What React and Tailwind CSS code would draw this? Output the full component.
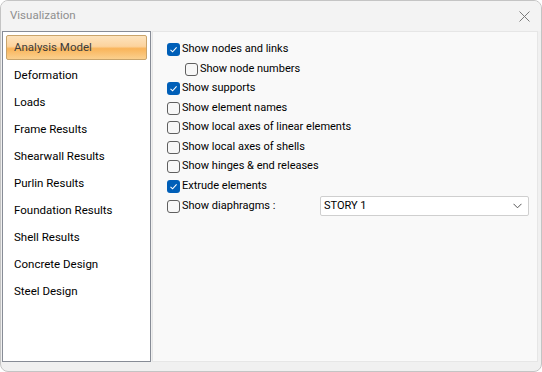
import React from "react";

const leftItems = [
  "Analysis Model",
  "Deformation",
  "Loads",
  "Frame Results",
  "Shearwall Results",
  "Purlin Results",
  "Foundation Results",
  "Shell Results",
  "Concrete Design",
  "Steel Design",
];

function Check({ checked }) {
  if (checked) {
    return (
      <span className="w-[13px] h-[13px] rounded-[3px] bg-[#005fb8] flex items-center justify-center shrink-0">
        <svg width="9" height="9" viewBox="0 0 9 9">
          <path d="M1.5 4.8 L3.6 6.8 L7.6 2.3" fill="none" stroke="#fff" strokeWidth="1.1" />
        </svg>
      </span>
    );
  }
  return <span className="w-[13px] h-[13px] rounded-[3px] border border-[#5f5f5f] bg-[#f7f7f7] shrink-0" />;
}

function Row({ checked, label, indent, h }) {
  return (
    <div className={`flex items-center gap-[2px] ${indent ? "pl-[18px]" : ""} ${h}`}>
      <Check checked={checked} />
      <span>{label}</span>
    </div>
  );
}

export default function App() {
  return (
    <div
      className="w-[542px] h-[372px] bg-[#f0f0f0] border border-[#c4c4c4] rounded-[8px] overflow-hidden flex flex-col text-[#1b1b1b]"
      style={{ fontFamily: 'Roboto, "Noto Sans", sans-serif' }}
    >
      <div className="h-[30px] flex items-center justify-between pl-[9px] pr-[11px] bg-[#f3f3f3]">
        <span className="text-[11.5px] text-[#8f8f8f]">Visualization</span>
        <svg width="11" height="11" viewBox="0 0 11 11">
          <path d="M0.5 0.5 L10.5 10.5 M10.5 0.5 L0.5 10.5" stroke="#7a7a7a" strokeWidth="1" />
        </svg>
      </div>
      <div className="flex flex-1 pl-[1px] pr-[3px] pb-[9px] gap-[1px]">
        <div className="w-[149px] bg-white border border-[#878c96] px-[3px] pt-[3px] flex flex-col text-[11.5px]">
          {leftItems.map((t, i) =>
            i === 0 ? (
              <div key={t} className="h-[27px] pb-[2px]">
                <div className="h-[25px] flex items-center pl-[7px] border border-[#c9a46b] rounded-[2px] text-[#3b3b3b] bg-[linear-gradient(to_bottom,#fde3bd_0%,#fcd39d_45%,#f9b45a_55%,#fbd08e_100%)]">
                  {t}
                </div>
              </div>
            ) : (
              <div key={t} className="h-[27px] flex items-center pl-[8px] text-black">
                {t}
              </div>
            )
          )}
        </div>
        <div className="flex-1 bg-[#f9f9f9] border border-[#e6e6e6] pl-[14px] pt-[7px] text-[11px] text-black">
          <Row checked label="Show nodes and links" h="h-[21px]" />
          <Row indent label="Show node numbers" h="h-[19px]" />
          <Row checked label="Show supports" h="h-[19px]" />
          <Row label="Show element names" h="h-[20px]" />
          <Row label="Show local axes of linear elements" h="h-[19px]" />
          <Row label="Show local axes of shells" h="h-[20px]" />
          <Row label="Show hinges & end releases" h="h-[19px]" />
          <Row checked label="Extrude elements" h="h-[20px]" />
          <div className="flex items-center h-[20px]">
            <div className="w-[153px] flex items-center gap-[2px]">
              <Check />
              <span>Show diaphragms :</span>
            </div>
            <div className="w-[209px] h-[20px] bg-white border border-[#cfcfcf] rounded-[2px] flex items-center justify-between pl-[3px] pr-[6px]">
              <span>STORY 1</span>
              <svg width="9" height="6" viewBox="0 0 9 6">
                <path d="M0.5 0.8 L4.5 4.8 L8.5 0.8" fill="none" stroke="#555" strokeWidth="1" />
              </svg>
            </div>
          </div>
        </div>
      </div>
    </div>
  );
}
